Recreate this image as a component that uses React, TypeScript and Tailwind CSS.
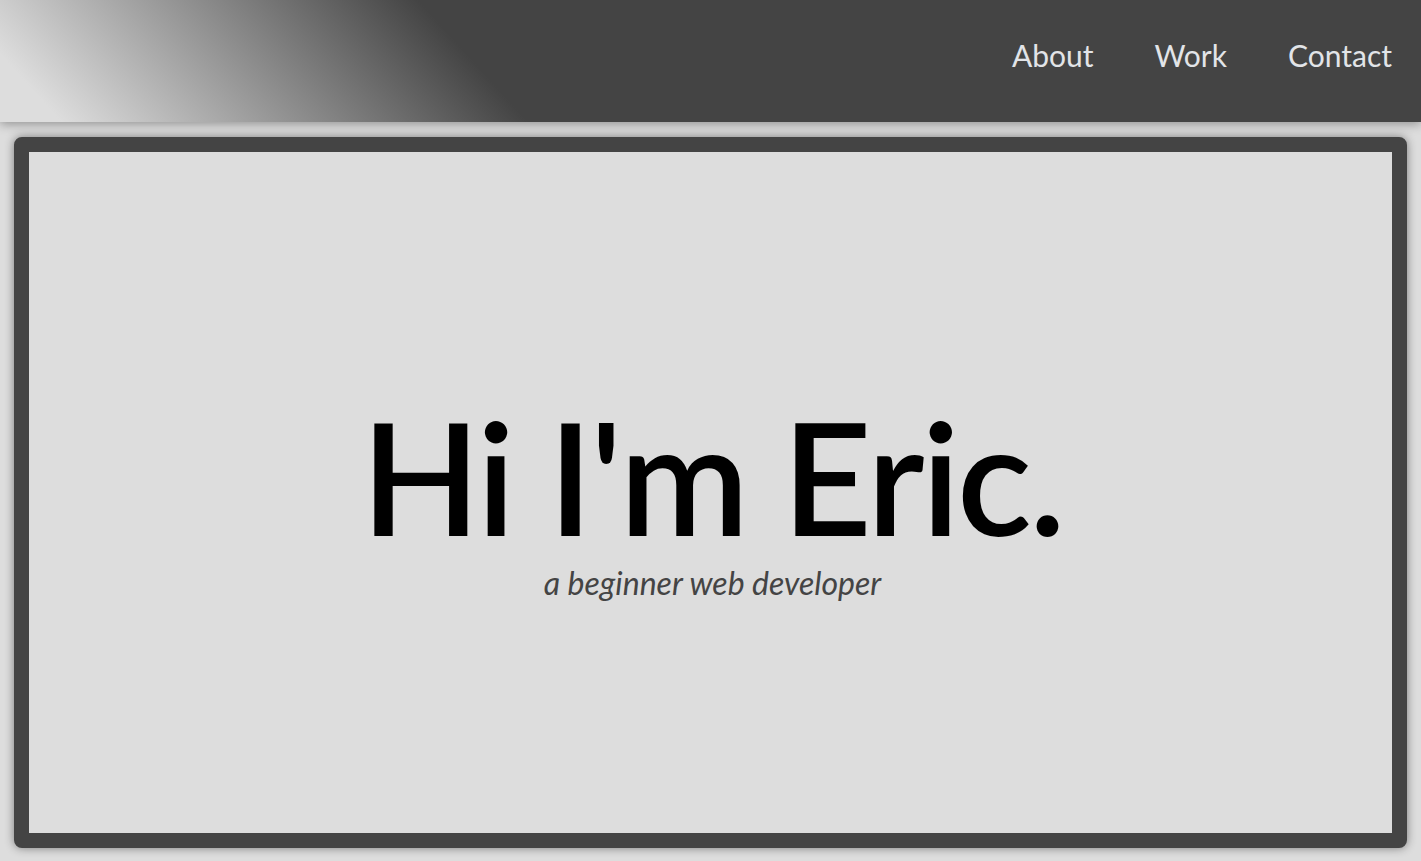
export default function App() {
  const links = ["About", "Work", "Contact"];

  return (
    <div className="min-h-screen bg-[#dddddd] font-['Lato','Noto_Sans',sans-serif] overflow-hidden">
      {/* Header */}
      <header className="h-[122px] flex items-center justify-end pr-[29px] pb-[12px] bg-[linear-gradient(48deg,#dddddd_4%,#444444_34.5%)] shadow-[0_2px_10px_rgba(0,0,0,0.35)] relative z-10">
        <nav className="flex gap-[61px]">
          {links.map((l) => (
            <a key={l} href="#" className="text-[30px] text-[#e2e4e8] leading-none">
              {l}
            </a>
          ))}
        </nav>
      </header>

      {/* Hero card */}
      <main className="mx-[14px] mt-[15px] h-[711px] rounded-[8px] border-[15px] border-[#444444] bg-[#dddddd] shadow-[0_0_10px_rgba(0,0,0,0.45)] flex flex-col items-center justify-center">
        <h1 className="text-[156px] font-semibold leading-none tracking-[-3px] text-black mt-[11px] pl-[3px]">
          Hi I'm Eric.
        </h1>
        <p className="text-[32px] italic text-[#444444] leading-none mt-[13px] pl-[4px]">
          a beginner web developer
        </p>
      </main>
    </div>
  );
}
